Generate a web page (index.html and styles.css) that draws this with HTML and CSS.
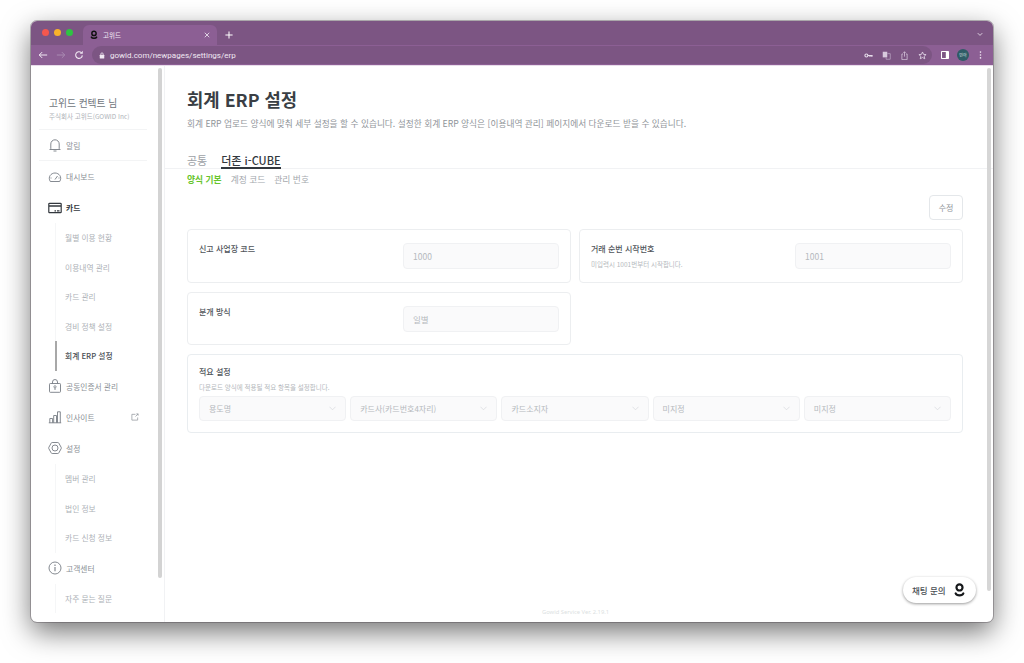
FILE: index.html
```html
<!DOCTYPE html>
<html lang="ko">
<head>
    <meta charset="utf-8">
    <title>고위드</title>
    <link rel="stylesheet" href="styles.css">
</head>
<body>

<div class="window">
    <!-- tab strip -->
    <div class="tabstrip">
        <div class="lights"><i class="red"></i><i class="yellow"></i><i class="green"></i></div>
        <div class="tab">
            <svg class="logo-small" viewBox="0 0 12 14"><circle cx="6" cy="4.6" r="3.2" fill="none" stroke="#111" stroke-width="2.2"/><path d="M2 10.2c1 2.2 7 2.2 8 0" fill="none" stroke="#111" stroke-width="2.2" stroke-linecap="round"/></svg>
            <span class="tab-title">고위드</span>
            <svg class="tab-close" viewBox="0 0 8 8"><path d="M1 1l6 6M7 1l-6 6" stroke="#e6dcea" stroke-width="1.2"/></svg>
        </div>
        <svg class="tab-new" viewBox="0 0 10 10"><path d="M5 .5v9M.5 5h9" stroke="#fff" stroke-width="1.3"/></svg>
        <svg class="tab-more" viewBox="0 0 8 6"><path d="M1 1.2l3 3 3-3" fill="none" stroke="#e6dcea" stroke-width="1.2"/></svg>
    </div>

    <!-- toolbar -->
    <div class="toolbar">
        <svg class="tool" viewBox="0 0 12 12"><path d="M11 6H1.5M5 2.5L1.5 6 5 9.5" fill="none" stroke="#f1e9f3" stroke-width="1.2"/></svg>
        <svg class="tool" viewBox="0 0 12 12"><path d="M1 6h9.5M7 2.5L10.500 6 7 9.500" fill="none" stroke="#a98bb2" stroke-width="1.2"/></svg>
        <svg class="tool" viewBox="0 0 12 12"><path d="M10 6.500A4 4 0 1 1 8.800 3.200" fill="none" stroke="#f1e9f3" stroke-width="1.300"/><path d="M10.500 1v3.500H7z" fill="#f1e9f3"/></svg>
        <div class="omnibox">
            <svg class="lock" viewBox="0 0 8 9"><rect x="1" y="3.500" width="6" height="5" rx=".8" fill="#f1e9f3"/><path d="M2.400 3.700V2.600a1.600 1.600 0 0 1 3.200 0v1.100" fill="none" stroke="#f1e9f3"/></svg>
            <span class="url">gowid.com/newpages/settings/erp</span>
            <div class="omni-icons">
                <svg viewBox="0 0 12 12"><circle cx="3.200" cy="6" r="2" fill="none" stroke="#e6dcea" stroke-width="1.500"/><path d="M5 6h6.500M8 6v2M10.500 6v2" stroke="#e6dcea" stroke-width="1.400"/></svg>
                <svg viewBox="0 0 12 12"><rect x="1" y="1" width="6" height="7.500" fill="#d8cadd"/><path d="M7 3.500h4v7.500H5.500V8.500" fill="none" stroke="#b9a4c1"/></svg>
                <svg viewBox="0 0 12 12"><path d="M4 4H2.500v7.500h7V4H8M6 7.500V1M4.500 2.500L6 1l1.500 1.500" fill="none" stroke="#d8cadd"/></svg>
                <svg viewBox="0 0 12 12"><path d="M6 1.300l1.400 3.200 3.400.3-2.600 2.200.8 3.400L6 8.600l-3 1.800.8-3.400L1.200 4.800l3.400-.3z" fill="none" stroke="#e6dcea" stroke-width="1.100"/></svg>
            </div>
        </div>
        <svg class="side-icon" viewBox="0 0 10 10"><rect width="10" height="10" rx="1" fill="#fff"/><rect x="1.300" y="1.300" width="4.700" height="7.400" fill="#7c5583"/></svg>
        <div class="avatar">민아</div>
        <svg class="dots" viewBox="0 0 3 11"><circle cx="1.500" cy="1.500" r="1.100" fill="#f1e9f3"/><circle cx="1.500" cy="5.500" r="1.100" fill="#f1e9f3"/><circle cx="1.500" cy="9.500" r="1.100" fill="#f1e9f3"/></svg>
    </div>

    <div class="page">
        <!-- sidebar -->
        <aside class="sidebar">
            <div class="profile">
                <div class="profile-name">고위드 컨텍트 님</div>
                <div class="profile-org">주식회사 고위드(GOWID Inc)</div>
            </div>
            <div class="nav-item nav-alarm">
                <svg class="nav-icon" viewBox="0 0 14 14"><path d="M2.800 10.500V6a4.200 4.200 0 0 1 8.400 0v4.500l1 1H1.800zM5.500 13h3" fill="none" stroke="#777d85" stroke-width=".9"/></svg>
                알림
            </div>
            <div class="nav-item">
                <svg class="nav-icon" viewBox="0 0 14 14"><path d="M2.300 11.500C-.5 7 3 3 7 3s7.500 4 4.700 8.500zM7 9.500L9.500 6M2.500 8h1M10.500 8h1" fill="none" stroke="#777d85" stroke-width=".9"/></svg>
                대시보드
            </div>
            <div class="nav-item nav-on">
                <svg class="nav-icon" viewBox="0 0 14 14"><rect x=".8" y="2.300" width="12.400" height="9.400" rx=".8" fill="none" stroke="#33383e" stroke-width="1.200"/><path d="M1 5h12" stroke="#33383e" stroke-width="1.600"/><path d="M6.500 9.800h1.500M9 9.800h2.500" stroke="#33383e" stroke-width="1.200"/></svg>
                카드
            </div>
            <div class="sub-list">
                <div class="sub-item">월별 이용 현황</div>
                <div class="sub-item">이용내역 관리</div>
                <div class="sub-item">카드 관리</div>
                <div class="sub-item">경비 정책 설정</div>
                <div class="sub-item sub-on">회계 ERP 설정</div>
            </div>
            <div class="nav-item">
                <svg class="nav-icon" viewBox="0 0 14 14"><rect x="1.500" y="4.500" width="11" height="8.800" rx=".8" fill="none" stroke="#777d85" stroke-width=".9"/><path d="M4.500 4.500V3a2.500 2.500 0 0 1 5 0v1.500" fill="none" stroke="#777d85" stroke-width=".9"/><circle cx="7" cy="7.800" r="1.100" fill="none" stroke="#777d85" stroke-width=".8"/><path d="M7 9v2" stroke="#777d85" stroke-width=".9"/></svg>
                공동인증서 관리
            </div>
            <div class="nav-item">
                <svg class="nav-icon" viewBox="0 0 14 14"><path d="M.8 12.800h12.400M1.800 12.800V8.500h2.800v4.300M5.700 12.800V5.500h2.800v7.300M9.500 12.800V1.800h2.800v11" fill="none" stroke="#777d85" stroke-width=".9"/></svg>
                인사이트
                <svg class="nav-link" viewBox="0 0 9 9"><path d="M5 1.500H1v6.500h6.500V5M5 4l3-3M6 1h2v2" fill="none" stroke="#8d9299" stroke-width=".8"/></svg>
            </div>
            <div class="nav-item">
                <svg class="nav-icon" viewBox="0 0 14 14"><path d="M4.200 1.500h5.600c.5 0 .8.200 1 .6l2.400 4.300c.2.400.2.800 0 1.200l-2.400 4.300c-.2.400-.5.600-1 .6H4.200c-.5 0-.8-.2-1-.6L.8 7.600c-.2-.4-.2-.8 0-1.200l2.400-4.300c.2-.4.5-.6 1-.6z" fill="none" stroke="#777d85" stroke-width=".9"/><circle cx="7" cy="7" r="3" fill="none" stroke="#777d85" stroke-width=".9"/></svg>
                설정
            </div>
            <div class="sub-list">
                <div class="sub-item">멤버 관리</div>
                <div class="sub-item">법인 정보</div>
                <div class="sub-item">카드 신청 정보</div>
            </div>
            <div class="nav-item">
                <svg class="nav-icon" viewBox="0 0 14 14"><circle cx="7" cy="7" r="6" fill="none" stroke="#777d85" stroke-width=".9"/><path d="M7 6v4.200M7 3.600v1.300" stroke="#777d85" stroke-width="1.100"/></svg>
                고객센터
            </div>
            <div class="sub-list">
                <div class="sub-item">자주 묻는 질문</div>
            </div>
            <div class="side-scroll"></div>
        </aside>

        <!-- main -->
        <main class="main">
            <div class="head">
                <h1>회계 ERP 설정</h1>
                <p class="head-desc">회계 ERP 업로드 양식에 맞춰 세부 설정을 할 수 있습니다. 설정한 회계 ERP 양식은 [이용내역 관리] 페이지에서 다운로드 받을 수 있습니다.</p>
            </div>
            <div class="tabs">
                <div class="tab-link">공통</div>
                <div class="tab-link tab-on">더존 i-CUBE</div>
            </div>
            <div class="subtabs">
                <span class="subtab-on">양식 기본</span>
                <span>계정 코드</span>
                <span>관리 번호</span>
            </div>
            <div class="actions"><button class="edit-btn">수정</button></div>

            <div class="card-grid">
                <div class="card">
                    <div class="card-label">신고 사업장 코드</div>
                    <div class="field">1000</div>
                </div>
                <div class="card">
                    <div>
                        <div class="card-label">거래 순번 시작번호</div>
                        <div class="card-hint">미입력시 1001번부터 시작합니다.</div>
                    </div>
                    <div class="field">1001</div>
                </div>
                <div class="card card-short">
                    <div class="card-label">분개 방식</div>
                    <div class="field">일별</div>
                </div>
            </div>

            <div class="card-wide">
                <div class="card-label">적요 설정</div>
                <div class="card-hint">다운로드 양식에 적용될 적요 항목을 설정합니다.</div>
                <div class="select-row">
                    <div class="select">용도명<svg viewBox="0 0 8 5"><path d="M.5.500l3.500 3.500L7.500.5" fill="none" stroke="#d5d8dc" stroke-width=".8"/></svg></div>
                    <div class="select">카드사(카드번호4자리)<svg viewBox="0 0 8 5"><path d="M.5.500l3.500 3.500L7.500.5" fill="none" stroke="#d5d8dc" stroke-width=".8"/></svg></div>
                    <div class="select">카드소지자<svg viewBox="0 0 8 5"><path d="M.5.500l3.500 3.500L7.500.5" fill="none" stroke="#d5d8dc" stroke-width=".8"/></svg></div>
                    <div class="select">미지정<svg viewBox="0 0 8 5"><path d="M.5.500l3.500 3.500L7.500.5" fill="none" stroke="#d5d8dc" stroke-width=".8"/></svg></div>
                    <div class="select">미지정<svg viewBox="0 0 8 5"><path d="M.5.500l3.500 3.500L7.500.5" fill="none" stroke="#d5d8dc" stroke-width=".8"/></svg></div>
                </div>
            </div>

            <div class="version">Gowid Service Ver. 2.19.1</div>
            <div class="main-scroll"></div>
            <div class="chat">
                채팅 문의
                <svg class="chat-logo" viewBox="0 0 12 16"><circle cx="6" cy="4.700" r="3.300" fill="none" stroke="#16181b" stroke-width="2.400"/><path d="M1.800 11.200c1.200 2.800 7.200 2.800 8.400 0" fill="none" stroke="#16181b" stroke-width="2.400" stroke-linecap="round"/></svg>
            </div>
        </main>
    </div>
</div>

</body>
</html>
```

FILE: styles.css
```css
html, body {
    margin: 0;
    height: 100%;
    background: #fff;
    overflow: hidden;
}
body {
    padding: 21px 31px 0;
    box-sizing: border-box;
    font-family: "Noto Sans CJK KR", "Noto Sans", sans-serif;
    color: #33383e;
}
.window {
    width: 962px;
    height: 601px;
    border-radius: 6px;
    overflow: hidden;
    display: flex;
    flex-direction: column;
    box-shadow: 0 10px 28px rgba(0, 0, 0, .55);
    background: #fff;
    outline: 1px solid rgba(70, 60, 70, .35);
}

/* tab strip */
.tabstrip {
    height: 24px;
    flex: none;
    display: flex;
    align-items: flex-end;
    background: #7c5583;
}
.lights {
    display: flex;
    gap: 5px;
    width: 52px;
    padding: 0 0 9px 11px;
    box-sizing: border-box;
}
.lights i {
    width: 7px;
    height: 7px;
    border-radius: 50%;
}
.red { background: #f4574e; }
.yellow { background: #f8b22a; }
.green { background: #2ec442; }
.tab {
    width: 134px;
    height: 20px;
    box-sizing: border-box;
    padding: 0 7px 0 7px;
    display: flex;
    align-items: center;
    gap: 5px;
    background: #8c5f94;
    border-radius: 6px 6px 0 0;
}
.logo-small {
    width: 8px;
    height: 10px;
}
.tab-title {
    flex: 1;
    font-size: 6.5px;
    color: #f1e9f3;
}
.tab-close {
    width: 6px;
    height: 6px;
}
.tab-new {
    width: 8px;
    height: 8px;
    margin: 0 0 6px 8px;
}
.tab-more {
    width: 6px;
    height: 5px;
    margin: 0 10px 8px auto;
}

/* toolbar */
.toolbar {
    height: 21px;
    flex: none;
    display: flex;
    align-items: center;
    background: #8c5f94;
    padding: 0 0 0 7px;
    border-bottom: 1px solid #e8dcea;
    box-sizing: border-box;
}
.tool {
    width: 10px;
    height: 10px;
    margin-right: 8px;
}
.omnibox {
    width: 840px;
    height: 18px;
    border-radius: 9px;
    background: #7c5583;
    display: flex;
    align-items: center;
    padding: 0 5px 0 7px;
    box-sizing: border-box;
}
.lock {
    width: 6px;
    height: 7px;
    margin-right: 5px;
}
.url {
    font: 8px "Roboto", sans-serif;
    color: #f1e9f3;
    flex: 1;
}
.omni-icons {
    display: flex;
    gap: 9px;
}
.omni-icons svg {
    width: 9px;
    height: 9px;
}
.side-icon {
    width: 8px;
    height: 8px;
    margin: 0 8px 0 9px;
}
.avatar {
    width: 12px;
    height: 12px;
    border-radius: 50%;
    background: #2f5b66;
    font-size: 4px;
    line-height: 12px;
    text-align: center;
    color: #dfe6e8;
}
.dots {
    width: 3px;
    height: 8px;
    margin-left: 10px;
}

/* page */
.page {
    flex: 1;
    display: flex;
    min-height: 0;
}
.sidebar {
    position: relative;
    width: 134px;
    flex: none;
    box-sizing: border-box;
    padding-left: 8px;
    border-right: 1px solid #f1f2f4;
    overflow: hidden;
}
.side-scroll {
    position: absolute;
    top: 2px;
    right: 2px;
    width: 4px;
    height: 510px;
    border-radius: 2px;
    background: #d3d3d3;
}
.profile {
    width: 108px;
    padding: 30px 0 8px 10px;
    box-sizing: border-box;
    height: 64px;
    border-bottom: 1px solid #f3f4f5;
}
.profile-name {
    font-size: 9.75px;
    line-height: 14px;
    color: #6e747b;
}
.profile-org {
    font-size: 6.5px;
    line-height: 12px;
    color: #aeb2b7;
}
.nav-item {
    height: 31px;
    display: flex;
    align-items: center;
    font-size: 7.75px;
    color: #8a8f96;
    padding-left: 10px;
}
.nav-alarm {
    width: 98px;
    height: 30px;
    border-bottom: 1px solid #f3f4f5;
}
.nav-icon {
    width: 14px;
    height: 14px;
    margin-right: 4px;
    margin-left: -1px;
}
.nav-on {
    color: #33383e;
    font-weight: 700;
}
.nav-link {
    width: 8px;
    height: 8px;
    margin-left: 36px;
}
.sub-list {
    margin-left: 16px;
    border-left: 1px solid #f5f6f7;
}
.sub-item {
    height: 29.6px;
    line-height: 29.6px;
    font-size: 7.75px;
    color: #aeb2b7;
    padding-left: 9px;
}
.sub-on {
    color: #4a4f55;
    font-weight: 500;
    border-left: 2px solid #a8a8a8;
    margin-left: -1px;
    padding-left: 8px;
}

/* main */
.main {
    position: relative;
    flex: 1;
    min-width: 0;
}
.head {
    padding: 20px 0 0 22px;
}
h1 {
    margin: 0;
    font-size: 17.75px;
    line-height: 26px;
    font-weight: 700;
    color: #3a3f45;
}
.head-desc {
    margin: 5px 0 0;
    font-size: 8.7px;
    line-height: 14px;
    color: #8f9499;
}
.tabs {
    margin-top: 19px;
    padding-left: 22px;
    height: 19px;
    display: flex;
    gap: 14px;
    border-bottom: 1px solid #f1f2f4;
    box-sizing: border-box;
}
.tab-link {
    font-size: 11px;
    line-height: 20px;
    color: #9da1a6;
}
.tab-on {
    color: #33383e;
    font-weight: 500;
    height: 19px;
    border-bottom: 2px solid #33383e;
    box-sizing: border-box;
}
.subtabs {
    display: flex;
    gap: 9px;
    padding: 4px 0 0 22px;
    font-size: 8.75px;
    line-height: 14px;
    color: #a4a8ad;
}
.subtab-on {
    color: #67c52b;
    font-weight: 700;
}
.actions {
    display: flex;
    justify-content: flex-end;
    padding: 8px 30px 0 0;
}
.edit-btn {
    width: 34px;
    height: 25px;
    padding: 0;
    border: 1px solid #e4e7ea;
    border-radius: 4px;
    background: #fff;
    font: 8px "Noto Sans CJK KR", sans-serif;
    color: #8f9499;
}
.card-grid {
    display: grid;
    grid-template-columns: 384px 384px;
    gap: 9px 8px;
    margin: 9px 0 0 22px;
}
.card {
    height: 54px;
    box-sizing: border-box;
    border: 1px solid #eceef0;
    border-radius: 4px;
    padding: 13px 11px 0;
    display: flex;
    justify-content: space-between;
}
.card-short {
    height: 53px;
}
.card-label {
    font-size: 8px;
    line-height: 12px;
    color: #4f545a;
    font-weight: 500;
}
.card-hint {
    font-size: 6.5px;
    line-height: 12px;
    color: #b5b9bd;
    margin-top: 3px;
}
.field {
    width: 156px;
    height: 26px;
    box-sizing: border-box;
    border: 1px solid #f0f1f3;
    border-radius: 4px;
    background: #fafafb;
    padding-left: 9px;
    font-size: 8.5px;
    line-height: 24px;
    color: #b5b9bd;
}
.card-wide {
    width: 776px;
    height: 79px;
    margin: 9px 0 0 22px;
    box-sizing: border-box;
    border: 1px solid #e9edf0;
    border-radius: 4px;
    padding: 11px 11px 0;
}
.select-row {
    display: flex;
    gap: 4px;
    margin-top: 3px;
}
.select {
    flex: 1;
    height: 25px;
    box-sizing: border-box;
    border: 1px solid #f0f1f3;
    border-radius: 4px;
    background: #fafafb;
    padding: 0 9px;
    display: flex;
    align-items: center;
    justify-content: space-between;
    font-size: 8px;
    color: #b5b9bd;
}
.select svg {
    width: 7px;
    height: 5px;
}
.version {
    position: absolute;
    left: 377px;
    bottom: 6px;
    font: 5.8px "Noto Sans", sans-serif;
    color: #dcdfe2;
}
.main-scroll {
    position: absolute;
    top: 2px;
    right: 2px;
    width: 4px;
    height: 523px;
    border-radius: 2px;
    background: #d6d6d6;
}
.chat {
    position: absolute;
    right: 17px;
    bottom: 19px;
    width: 73px;
    height: 26px;
    box-sizing: border-box;
    padding-left: 9px;
    border-radius: 13px;
    background: #fff;
    box-shadow: 0 1px 3px rgba(0, 0, 0, .4);
    display: flex;
    align-items: center;
    gap: 8px;
    font-size: 8.5px;
    font-weight: 500;
    color: #4a4f55;
}
.chat-logo {
    width: 11px;
    height: 15px;
}
```
